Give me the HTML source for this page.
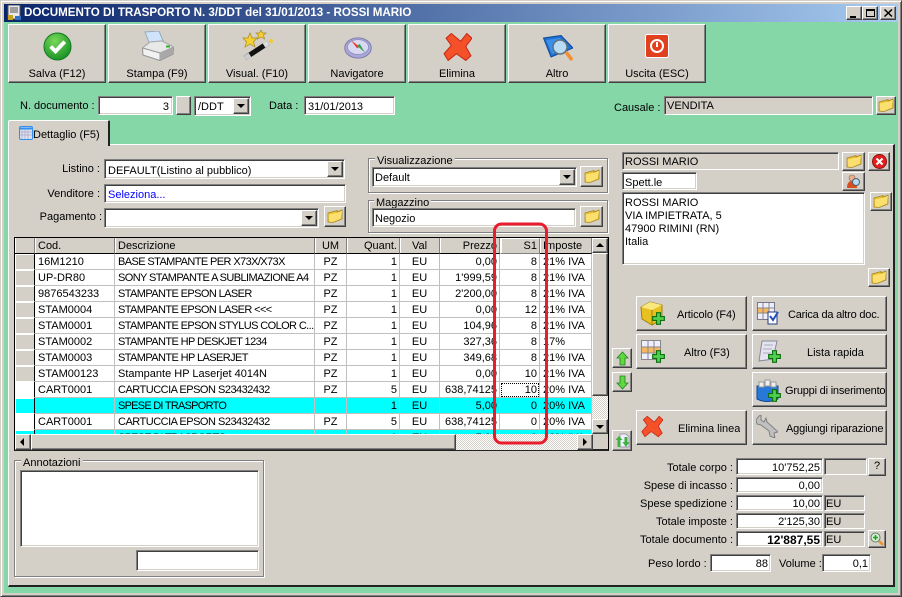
<!DOCTYPE html>
<html><head><meta charset="utf-8"><title>DDT</title>
<style>
*{box-sizing:border-box;margin:0;padding:0}
html,body{width:902px;height:597px;overflow:hidden;background:#d4d0c8}
body{position:relative;font:11px/14px "Liberation Sans",sans-serif;color:#000}
div,svg,table{position:absolute}
.s{background:#fff;border:1px solid;border-color:#808080 #fff #fff #808080;box-shadow:inset 1px 1px 0 #404040,inset -1px -1px 0 #d4d0c8;padding:3px 3px 0;white-space:nowrap;overflow:hidden}
.g{background:#d4d0c8}
.ra{text-align:right}
.r{background:#d4d0c8;border:1px solid;border-color:#fff #404040 #404040 #fff;box-shadow:inset -1px -1px 0 #808080;white-space:nowrap}
.l{white-space:nowrap}
.lr{white-space:nowrap;text-align:right}
.tb{top:24px;width:98px;height:59px}
.tb span{position:absolute;left:0;right:0;top:42px;text-align:center}
.ab span{position:absolute;top:11px;white-space:nowrap;overflow:hidden}
.dd{position:absolute;background:#d4d0c8;border:1px solid;border-color:#fff #404040 #404040 #fff;box-shadow:inset -1px -1px 0 #808080}
.dd:after{content:"";position:absolute;left:3px;top:5px;border:4px solid transparent;border-top:4px solid #000;border-bottom:0}
.gb{border:1px solid #808080;box-shadow:1px 1px 0 #fff,inset 1px 1px 0 #fff}
.gt{background:#d4d0c8;padding:0 2px;white-space:nowrap;line-height:12px}
table{border-collapse:separate;border-spacing:0;table-layout:fixed;left:15px;top:238px;width:577px;font-size:11px;background:#fff}
td,th{height:16px;padding:0 3px;white-space:nowrap;overflow:hidden;border-right:1px solid #c0c0c0;border-bottom:1px solid #c0c0c0;font-weight:normal;line-height:14px;text-align:left}
th{height:15px;background:#d4d0c8;border-right:1px solid #808080;border-bottom:1px solid #000;box-shadow:inset 1px 0 0 #fff}
td.i{background:#d4d0c8;border-right:1px solid #000;border-bottom:1px solid #fff;box-shadow:inset 1px 1px 0 #fff}
td.w{background:#fff}
td.d{letter-spacing:-.6px}
td.e{letter-spacing:-.5px}
td.f{letter-spacing:-.75px}
.n{text-align:right;padding-right:2px}
td.c,th.c{text-align:center;padding:0}
tr.cy td{background:#00ffff;border-right-color:#c0c0c0}
.hatch{background-color:#fff;background-image:linear-gradient(45deg,#d4d0c8 25%,transparent 25%,transparent 75%,#d4d0c8 75%),linear-gradient(45deg,#d4d0c8 25%,transparent 25%,transparent 75%,#d4d0c8 75%);background-size:2px 2px;background-position:0 0,1px 1px}
</style></head><body>
<svg width="0" height="0" style="left:0;top:0"><defs>
<symbol id="fo" viewBox="0 0 16 16"><path d="M1 5 L10 2.500 L10 4 L15 2 L15 11 L6 14.500 L1 14 Z" fill="#e8c030" stroke="#a88820" stroke-width=".8"/><path d="M1.500 6.500 L11 4.500 L15 3 L14 10.500 L6 14 L2 13.500 Z" fill="#fbe070"/></symbol>
<symbol id="pl" viewBox="0 0 10 10"><path d="M3.500 .5h3v3h3v3h-3v3h-3v-3h-3v-3h3z" fill="#50d050" stroke="#107010" stroke-width=".9"/></symbol>
<symbol id="x" viewBox="0 0 28 27"><path d="M8 .5 L17 8 L23 .5 L28 5 L22 13 L27 22 L22 26.500 L13 20 L5 26.500 L1 20 L8 12 L3 5 Z" fill="#f4502a" stroke="#c82810"/></symbol>
</defs></svg>

<div style="left:0;top:0;width:902px;height:597px;border:1px solid;border-color:#d4d0c8 #404040 #404040 #d4d0c8;box-shadow:inset 1px 1px 0 #fff,inset -1px -1px 0 #808080"></div>

<div style="left:4px;top:4px;width:894px;height:18px;background:linear-gradient(90deg,#0a246a,#a6caf0)"></div>
<svg style="left:7px;top:5px" width="15" height="16" viewBox="0 0 15 16"><rect x="1" y="0" width="12" height="14" fill="#e8e8e8" stroke="#555"/><path d="M3 3h8M3 5h8M3 7h8" stroke="#555"/><rect x="1" y="10" width="5" height="5" fill="#c8a020"/><rect x="8" y="11" width="6" height="4" fill="#3070c0"/></svg>
<div class="l" style="left:24px;top:6px;color:#fff;font-weight:bold;font-size:11.6px;line-height:14px">DOCUMENTO DI TRASPORTO N. 3/DDT del 31/01/2013 - ROSSI MARIO</div>
<div class="r" style="left:846px;top:6px;width:16px;height:14px"><div style="left:3px;top:9px;width:6px;height:2px;background:#000"></div></div>
<div class="r" style="left:862px;top:6px;width:16px;height:14px"><div style="left:3px;top:2px;width:9px;height:8px;border:1px solid #000;border-top-width:2px"></div></div>
<div class="r" style="left:880px;top:6px;width:16px;height:14px"><svg style="left:3px;top:2px" width="9" height="8"><path d="M.5 .5L8 7.500M8 .5L.5 7.500" stroke="#000" stroke-width="1.500"/></svg></div>

<div style="left:4px;top:22px;width:894px;height:571px;background:#86d7a8"></div>

<div class="r tb" style="left:8px"><span>Salva (F12)</span><svg style="left:34px;top:7px" width="29" height="29" viewBox="0 0 30 30"><defs><radialGradient id="gr" cx=".4" cy=".3" r=".8"><stop offset="0" stop-color="#7ad85a"/><stop offset="1" stop-color="#0d8a1e"/></radialGradient></defs><circle cx="15" cy="15" r="14" fill="url(#gr)" stroke="#127a20"/><path d="M8 15 L13 20 L22.500 10" fill="none" stroke="#fff" stroke-width="4"/></svg></div>
<div class="r tb" style="left:108px"><span>Stampa (F9)</span><svg style="left:33px;top:6px" width="32" height="30" viewBox="0 0 32 30"><path d="M3 1 L17 0 L22 12 L8 14 Z" fill="#cfe4fa" stroke="#9ab"/><path d="M0.500 17 L8 11 L20 10 L31.500 16 L31 23 L18 29.500 L1 24 Z" fill="#b8b8b8" stroke="#888"/><path d="M.5 17 L8 11 L20 10 L31.500 16 L18 22 Z" fill="#e8e8e8" stroke="#aaa"/><path d="M.5 17 L18 22 L18 29.500 L1 24 Z" fill="#f2f2f2" stroke="#999"/><path d="M18 22 L31.500 16 L31 23 L18 29.500Z" fill="#a8a8a8"/><rect x="24" y="14.500" width="4" height="2" fill="#30b030"/></svg></div>
<div class="r tb" style="left:208px"><span>Visual. (F10)</span><svg style="left:33px;top:5px" width="32" height="32" viewBox="0 0 32 32"><path d="M8 3 L10 8 L15 8 L11.500 12 L13 17 L8 14 L3 17 L4.500 12 L1 8 L6 8 Z" fill="#f4d030" stroke="#a88820" stroke-width=".7"/><path d="M19 0 L20.500 3 L24 3 L21.500 5 L22.500 9 L19 7 L15.500 9 L16.500 5 L14 3 L17.500 3 Z" fill="#f4d030" stroke="#a88820" stroke-width=".7"/><path d="M3 28 L26 13" stroke="#111" stroke-width="5"/><path d="M3 28 L8 25" stroke="#ccc" stroke-width="5"/><path d="M22 15.500 L26 13" stroke="#ddd" stroke-width="5"/><circle cx="29" cy="11" r="2" fill="#f0c830"/></svg></div>
<div class="r tb" style="left:308px"><span>Navigatore</span><svg style="left:34px;top:11px" width="30" height="23" viewBox="0 0 32 26"><ellipse cx="16" cy="13.500" rx="15" ry="11.500" fill="#aaa8d8" stroke="#7878a8"/><ellipse cx="16" cy="12.500" rx="12" ry="8.500" fill="#d8d8f0" stroke="#9090c0"/><path d="M8 5 L18 12 L15 14 Z" fill="#e84030"/><path d="M15 11 L18 9 L24 19 Z" fill="#30a050"/></svg></div>
<div class="r tb" style="left:408px"><span>Elimina</span><svg style="left:34px;top:8px" width="29" height="28"><use href="#x"/></svg></div>
<div class="r tb" style="left:508px"><span>Altro</span><svg style="left:34px;top:10px" width="30" height="26" viewBox="0 0 30 26"><path d="M0.500 3 L18 .5 L30 13 L8 22 Z" fill="#2070d0" stroke="#104898"/><path d="M3 5 L17 3 L26 13 L9 19 Z" fill="#3a90e8"/><circle cx="17" cy="12" r="7" fill="#b8dcf4" stroke="#607080" stroke-width="1.500"/><path d="M23 17 L29 25" stroke="#f09030" stroke-width="3.500"/></svg></div>
<div class="r tb" style="left:608px"><span>Uscita (ESC)</span><svg style="left:36px;top:9px" width="24" height="24" viewBox="0 0 24 24"><rect x=".5" y=".5" width="23" height="23" rx="2" fill="#e0401e" stroke="#fff"/><circle cx="12" cy="12" r="6" fill="none" stroke="#fff" stroke-width="2"/><path d="M12 8v5" stroke="#fff" stroke-width="2"/></svg></div>

<div class="l" style="left:20px;top:99px">N. documento :</div>
<div class="s ra" style="left:98px;top:96px;width:75px;height:19px">3</div>
<div class="r" style="left:176px;top:96px;width:15px;height:19px"></div>
<div class="s" style="left:194px;top:96px;width:57px;height:20px">/DDT</div>
<div class="dd" style="left:233px;top:98px;width:16px;height:16px"></div>
<div class="l" style="left:269px;top:99px">Data :</div>
<div class="s" style="left:304px;top:96px;width:91px;height:19px">31/01/2013</div>
<div class="l" style="left:614px;top:101px">Causale :</div>
<div class="s g" style="left:664px;top:96px;width:209px;height:19px;padding:2px 0 0 2px">VENDITA</div>
<div class="r" style="left:876px;top:96px;width:20px;height:19px"><svg style="left:1px;top:0" width="16" height="16"><use href="#fo"/></svg></div>

<div style="left:8px;top:144px;width:887px;height:443px;background:#d4d0c8;border-top:1px solid #fff;border-left:1px solid #fff;border-right:2px solid #222;border-bottom:2px solid #222"></div>
<div style="left:8px;top:120px;width:102px;height:26px;background:#d4d0c8;border-top:1px solid #fff;border-left:1px solid #fff;border-right:2px solid #222;border-radius:2px 2px 0 0"></div>
<svg style="left:19px;top:126px" width="14" height="14" viewBox="0 0 14 14"><rect x=".5" y=".5" width="13" height="13" rx="1.500" fill="#dde0ee" stroke="#3090f0"/><path d="M1 2.500h12" stroke="#3090f0" stroke-width="2"/><path d="M3 4v9M6 4v9M9 4v9M1 6h12M1 9h12" stroke="#a8a8c8" stroke-width=".7"/></svg>
<div class="l" style="left:33px;top:128px">Dettaglio (F5)</div>

<div class="lr" style="left:40px;top:162px;width:60px">Listino :</div>
<div class="s" style="left:104px;top:159px;width:241px;height:20px;padding:4px 0 0 3px">DEFAULT(Listino al pubblico)</div>
<div class="dd" style="left:327px;top:161px;width:16px;height:16px"></div>
<div class="lr" style="left:30px;top:187px;width:70px">Venditore :</div>
<div class="s" style="left:104px;top:184px;width:242px;height:19px;color:#0000ff">Seleziona...</div>
<div class="lr" style="left:30px;top:210px;width:72px">Pagamento :</div>
<div class="s" style="left:104px;top:208px;width:215px;height:20px"></div>
<div class="dd" style="left:301px;top:210px;width:16px;height:16px"></div>
<div class="r" style="left:324px;top:206px;width:22px;height:21px"><svg style="left:2px;top:1px" width="16" height="16"><use href="#fo"/></svg></div>

<div class="gb" style="left:368px;top:158px;width:240px;height:35px"></div>
<div class="gt" style="left:375px;top:155px">Visualizzazione</div>
<div class="s" style="left:372px;top:167px;width:205px;height:20px;padding-left:2px">Default</div>
<div class="dd" style="left:559px;top:169px;width:16px;height:16px"></div>
<div class="r" style="left:580px;top:166px;width:23px;height:21px"><svg style="left:3px;top:1px" width="16" height="16"><use href="#fo"/></svg></div>
<div class="gb" style="left:368px;top:200px;width:240px;height:33px"></div>
<div class="gt" style="left:374px;top:197px">Magazzino</div>
<div class="s" style="left:372px;top:208px;width:204px;height:19px;padding-left:2px">Negozio</div>
<div class="r" style="left:580px;top:206px;width:23px;height:21px"><svg style="left:3px;top:1px" width="16" height="16"><use href="#fo"/></svg></div>

<div style="left:14px;top:237px;width:595px;height:214px;background:#d4d0c8;border:1px solid #000;border-bottom:2px solid #222"></div>
<div style="left:15px;top:238px;width:577px;height:196px;overflow:hidden"><table style="left:0;top:0">
<colgroup><col style="width:20px"><col style="width:80px"><col style="width:200px"><col style="width:32px"><col style="width:53px"><col style="width:40px"><col style="width:60px"><col style="width:40px"><col style="width:52px"></colgroup>
<tr><th></th><th>Cod.</th><th>Descrizione</th><th class="c">UM</th><th class="n">Quant.</th><th class="c">Val</th><th class="n">Prezzo</th><th class="n" style="border:1px solid #808080;border-top-color:#fff;border-left-color:#fff">S1</th><th>Imposte</th></tr>
<tr><td class="i"></td><td>16M1210</td><td class="d">BASE STAMPANTE PER X73X/X73X</td><td class="c">PZ</td><td class="n">1</td><td class="c">EU</td><td class="n">0,00</td><td class="n">8</td><td>21% IVA</td></tr>
<tr><td class="i"></td><td>UP-DR80</td><td class="d">SONY STAMPANTE A SUBLIMAZIONE A4</td><td class="c">PZ</td><td class="n">1</td><td class="c">EU</td><td class="n">1'999,59</td><td class="n">8</td><td>21% IVA</td></tr>
<tr><td class="i"></td><td>9876543233</td><td class="d">STAMPANTE EPSON LASER</td><td class="c">PZ</td><td class="n">1</td><td class="c">EU</td><td class="n">2'200,00</td><td class="n">8</td><td>21% IVA</td></tr>
<tr><td class="i"></td><td>STAM0004</td><td class="d">STAMPANTE EPSON LASER &lt;&lt;&lt;</td><td class="c">PZ</td><td class="n">1</td><td class="c">EU</td><td class="n">0,00</td><td class="n">12</td><td>21% IVA</td></tr>
<tr><td class="i"></td><td>STAM0001</td><td class="d">STAMPANTE EPSON STYLUS COLOR C...</td><td class="c">PZ</td><td class="n">1</td><td class="c">EU</td><td class="n">104,96</td><td class="n">8</td><td>21% IVA</td></tr>
<tr><td class="i"></td><td>STAM0002</td><td class="d">STAMPANTE HP DESKJET 1234</td><td class="c">PZ</td><td class="n">1</td><td class="c">EU</td><td class="n">327,36</td><td class="n">8</td><td>17%</td></tr>
<tr><td class="i"></td><td>STAM0003</td><td class="d">STAMPANTE HP LASERJET</td><td class="c">PZ</td><td class="n">1</td><td class="c">EU</td><td class="n">349,68</td><td class="n">8</td><td>21% IVA</td></tr>
<tr><td class="i"></td><td>STAM00123</td><td>Stampante HP Laserjet 4014N</td><td class="c">PZ</td><td class="n">1</td><td class="c">EU</td><td class="n">0,00</td><td class="n">10</td><td>21% IVA</td></tr>
<tr><td class="i w"></td><td>CART0001</td><td class="e">CARTUCCIA EPSON S23432432</td><td class="c">PZ</td><td class="n">5</td><td class="c">EU</td><td class="n">638,74125</td><td class="n" style="outline:1px dotted #000;outline-offset:-2px">10</td><td>20% IVA</td></tr>
<tr class="cy"><td class="i" style="border-right:1px solid #000"></td><td></td><td class="f">SPESE DI TRASPORTO</td><td></td><td class="n">1</td><td class="c">EU</td><td class="n">5,00</td><td class="n">0</td><td>20% IVA</td></tr>
<tr><td class="i w"></td><td>CART0001</td><td class="e">CARTUCCIA EPSON S23432432</td><td class="c">PZ</td><td class="n">5</td><td class="c">EU</td><td class="n">638,74125</td><td class="n">0</td><td>20% IVA</td></tr>
<tr class="cy"><td class="i" style="border-right:1px solid #000"></td><td></td><td class="f">SPESE DI TRASPORTO</td><td></td><td class="n">1</td><td class="c">EU</td><td class="n">5,00</td><td class="n">0</td><td>20% IVA</td></tr>
</table></div>

<div class="hatch" style="left:592px;top:253px;width:16px;height:166px"></div>
<div class="r" style="left:592px;top:253px;width:16px;height:143px"></div>
<div class="r" style="left:592px;top:238px;width:16px;height:15px"><div style="left:3px;top:4px;border:4px solid transparent;border-bottom:4px solid #000;border-top:0"></div></div>
<div class="r" style="left:592px;top:419px;width:16px;height:15px"><div style="left:3px;top:5px;border:4px solid transparent;border-top:4px solid #000;border-bottom:0"></div></div>
<div class="hatch" style="left:31px;top:434px;width:546px;height:16px"></div>
<div class="r" style="left:15px;top:434px;width:16px;height:16px"><div style="left:4px;top:3px;border:4px solid transparent;border-right:4px solid #000;border-left:0"></div></div>
<div class="r" style="left:31px;top:434px;width:425px;height:16px"></div>
<div class="r" style="left:577px;top:434px;width:16px;height:16px"><div style="left:5px;top:3px;border:4px solid transparent;border-left:4px solid #000;border-right:0"></div></div>

<svg style="left:485px;top:215px" width="70" height="236"><rect x="9.500" y="9" width="52" height="219" rx="7" fill="none" stroke="#e81c2c" stroke-width="3"/></svg>

<div class="r" style="left:612px;top:348px;width:20px;height:20px"><svg style="left:3px;top:2px" width="13" height="15" viewBox="0 0 13 15"><path d="M6.500 1 L12 7 L9 7 L9 14 L4 14 L4 7 L1 7 Z" fill="#60d840" stroke="#208020" stroke-width=".8"/></svg></div>
<div class="r" style="left:612px;top:372px;width:20px;height:20px"><svg style="left:3px;top:2px" width="13" height="15" viewBox="0 0 13 15"><path d="M6.500 14 L12 8 L9 8 L9 1 L4 1 L4 8 L1 8 Z" fill="#60d840" stroke="#208020" stroke-width=".8"/></svg></div>
<div class="r" style="left:612px;top:430px;width:20px;height:21px"><svg style="left:2px;top:2px" width="16" height="16" viewBox="0 0 16 16"><path d="M5 1h6l3 3v10H5z" fill="#eef" stroke="#889" stroke-width=".7"/><path d="M4 3 L7.500 7 L5.500 7 L5.500 14 L2.500 14 L2.500 7 L.5 7 Z" fill="#40b040"/><path d="M11 14 L14.500 9 L12.500 9 L12.500 4 L9.500 4 L9.500 9 L7.500 9 Z" fill="#40b040"/></svg></div>

<div class="s g" style="left:622px;top:152px;width:217px;height:18px;padding:2px 0 0 2px">ROSSI MARIO</div>
<div class="r" style="left:842px;top:152px;width:23px;height:19px"><svg style="left:3px;top:0" width="16" height="16"><use href="#fo"/></svg></div>
<div class="r" style="left:868px;top:152px;width:22px;height:19px"><svg style="left:3px;top:1px" width="15" height="15" viewBox="0 0 15 15"><circle cx="7.500" cy="7.500" r="7" fill="#e02020" stroke="#901010"/><path d="M4.500 4.500L10.500 10.500M10.500 4.500L4.500 10.500" stroke="#fff" stroke-width="2"/></svg></div>
<div class="s" style="left:622px;top:172px;width:75px;height:18px;padding:3px 0 0 2px">Spett.le</div>
<div class="r" style="left:842px;top:172px;width:23px;height:19px"><svg style="left:3px;top:1px" width="16" height="15" viewBox="0 0 16 15"><circle cx="6" cy="4" r="3" fill="#e8b090" stroke="#a06040" stroke-width=".6"/><path d="M1 14c0-5 2-7 5-7s5 2 5 7z" fill="#d85020"/><circle cx="10" cy="8" r="3.500" fill="#b8dcf4" stroke="#506070"/></svg></div>
<div class="s" style="left:622px;top:192px;width:243px;height:73px;padding:4px 3px 0 2px;line-height:13px;white-space:pre">ROSSI MARIO
VIA IMPIETRATA, 5
47900 RIMINI (RN)
Italia</div>
<div class="r" style="left:870px;top:192px;width:22px;height:19px"><svg style="left:2px;top:0" width="16" height="16"><use href="#fo"/></svg></div>
<div class="r" style="left:868px;top:268px;width:22px;height:19px"><svg style="left:2px;top:0" width="16" height="16"><use href="#fo"/></svg></div>

<div class="r ab" style="left:636px;top:296px;width:111px;height:35px"><span style="left:40px;letter-spacing:-.1px">Articolo (F4)</span><svg style="left:3px;top:4px" width="26" height="26" viewBox="0 0 26 26"><path d="M1 6 L10 1 L22 4 L22 18 L12 24 L2 18 Z" fill="#e8c020" stroke="#a08010"/><path d="M1 6 L12 9 L22 4 L10 1Z" fill="#f8e880"/><path d="M12 9V24" stroke="#a08010"/></svg><svg style="left:15px;top:15px" width="13" height="13"><use href="#pl"/></svg></div>
<div class="r ab" style="left:752px;top:296px;width:135px;height:35px"><span style="left:35px;letter-spacing:-.2px">Carica da altro doc.</span><svg style="left:4px;top:5px" width="22" height="24" viewBox="0 0 22 24"><rect x=".5" y=".5" width="17" height="17" fill="#eef" stroke="#778"/><rect x="1" y="6" width="11" height="5" fill="#f8b860"/><path d="M6 1v16M12 1v16M1 6h16M1 11h16" stroke="#888"/><rect x="11" y="10" width="9" height="12" fill="#fff" stroke="#223a80"/><path d="M13 14l3 4 5-8" fill="none" stroke="#2050c0" stroke-width="2"/></svg></div>
<div class="r ab" style="left:636px;top:334px;width:111px;height:35px"><span style="left:47px">Altro (F3)</span><svg style="left:4px;top:5px" width="20" height="20" viewBox="0 0 20 20"><rect x=".5" y=".5" width="19" height="19" fill="#eef" stroke="#888"/><rect x="1" y="7" width="18" height="6" fill="#f8b860"/><path d="M7 1v18M13 1v18M1 7h18M1 13h18" stroke="#888"/></svg><svg style="left:15px;top:15px" width="13" height="13"><use href="#pl"/></svg></div>
<div class="r ab" style="left:752px;top:334px;width:135px;height:35px"><span style="left:54px">Lista rapida</span><svg style="left:4px;top:4px" width="22" height="24" viewBox="0 0 22 24"><path d="M5 2 L20 2 L16 20 L2 22 Z" fill="#e4e4f0" stroke="#889"/><path d="M7 6h9M6 10h9M6 14h8" stroke="#aab"/></svg><svg style="left:15px;top:15px" width="13" height="13"><use href="#pl"/></svg></div>
<div class="r ab" style="left:752px;top:372px;width:135px;height:35px"><span style="left:32px;width:100px;letter-spacing:-.2px">Gruppi di inserimento</span><svg style="left:3px;top:4px" width="24" height="26" viewBox="0 0 24 26"><path d="M1 9 L22 9 L22 22 Q11 27 1 22Z" fill="#2878d8" stroke="#104898"/><path d="M3 5h5v5H3zM9 3h5v6H9zM15 5h5v5h-5z" fill="#eee" stroke="#999"/></svg><svg style="left:15px;top:16px" width="13" height="13"><use href="#pl"/></svg></div>
<div class="r ab" style="left:636px;top:410px;width:111px;height:35px"><span style="left:41px">Elimina linea</span><svg style="left:4px;top:4px" width="22" height="23"><use href="#x"/></svg></div>
<div class="r ab" style="left:752px;top:410px;width:135px;height:35px"><span style="left:33px;letter-spacing:-.15px">Aggiungi riparazione</span><svg style="left:3px;top:4px" width="22" height="23" viewBox="0 0 22 23"><path d="M0 5 L3 1 L5 0 L5 5 L8 7 L10 3 L11 7 L21 16 L22 17 L18 18 L19 23 L14 21 L13 16 L5 10 L1 9 Z" fill="#c0c0c0" stroke="#808080"/></svg></div>

<div class="lr" style="left:620px;top:461px;width:113px">Totale corpo :</div>
<div class="s ra" style="left:736px;top:458px;width:87px;height:17px;padding:2px 2px 0">10'752,25</div>
<div class="s g" style="left:824px;top:458px;width:43px;height:17px"></div>
<div class="r" style="left:868px;top:458px;width:18px;height:18px;text-align:center">?</div>
<div class="lr" style="left:620px;top:479px;width:113px">Spese di incasso :</div>
<div class="s ra" style="left:736px;top:477px;width:87px;height:16px;padding:1px 2px 0">0,00</div>
<div class="lr" style="left:620px;top:497px;width:113px">Spese spedizione :</div>
<div class="s ra" style="left:736px;top:495px;width:87px;height:16px;padding:1px 2px 0">10,00</div>
<div class="s g" style="left:824px;top:495px;width:41px;height:16px;padding:1px 1px 0">EU</div>
<div class="lr" style="left:620px;top:515px;width:113px">Totale imposte :</div>
<div class="s ra" style="left:736px;top:513px;width:87px;height:16px;padding:1px 2px 0">2'125,30</div>
<div class="s g" style="left:824px;top:513px;width:41px;height:16px;padding:1px 1px 0">EU</div>
<div class="lr" style="left:620px;top:533px;width:113px">Totale documento :</div>
<div class="s ra" style="left:736px;top:531px;width:87px;height:16px;padding:1px 2px 0;font-weight:bold;font-size:12px">12'887,55</div>
<div class="s g" style="left:824px;top:531px;width:41px;height:16px;padding:1px 1px 0">EU</div>
<div class="r" style="left:868px;top:530px;width:18px;height:18px"><svg style="left:1px;top:1px" width="14" height="14" viewBox="0 0 14 14"><circle cx="5.500" cy="5.500" r="4.500" fill="#d8f0d8" stroke="#608060"/><path d="M5.500 3v5M3 5.500h5" stroke="#20a020" stroke-width="1.500"/><path d="M9 9l4 4" stroke="#f09030" stroke-width="2.500"/></svg></div>
<div class="l" style="left:648px;top:557px">Peso lordo :</div>
<div class="s ra" style="left:710px;top:554px;width:61px;height:18px;padding:2px">88</div>
<div class="l" style="left:779px;top:557px">Volume :</div>
<div class="s ra" style="left:822px;top:554px;width:49px;height:18px;padding:2px">0,1</div>

<div class="gb" style="left:14px;top:460px;width:250px;height:117px"></div>
<div class="gt" style="left:21px;top:457px">Annotazioni</div>
<div class="s" style="left:20px;top:470px;width:239px;height:77px"></div>
<div class="s" style="left:136px;top:550px;width:123px;height:21px"></div>
</body></html>
